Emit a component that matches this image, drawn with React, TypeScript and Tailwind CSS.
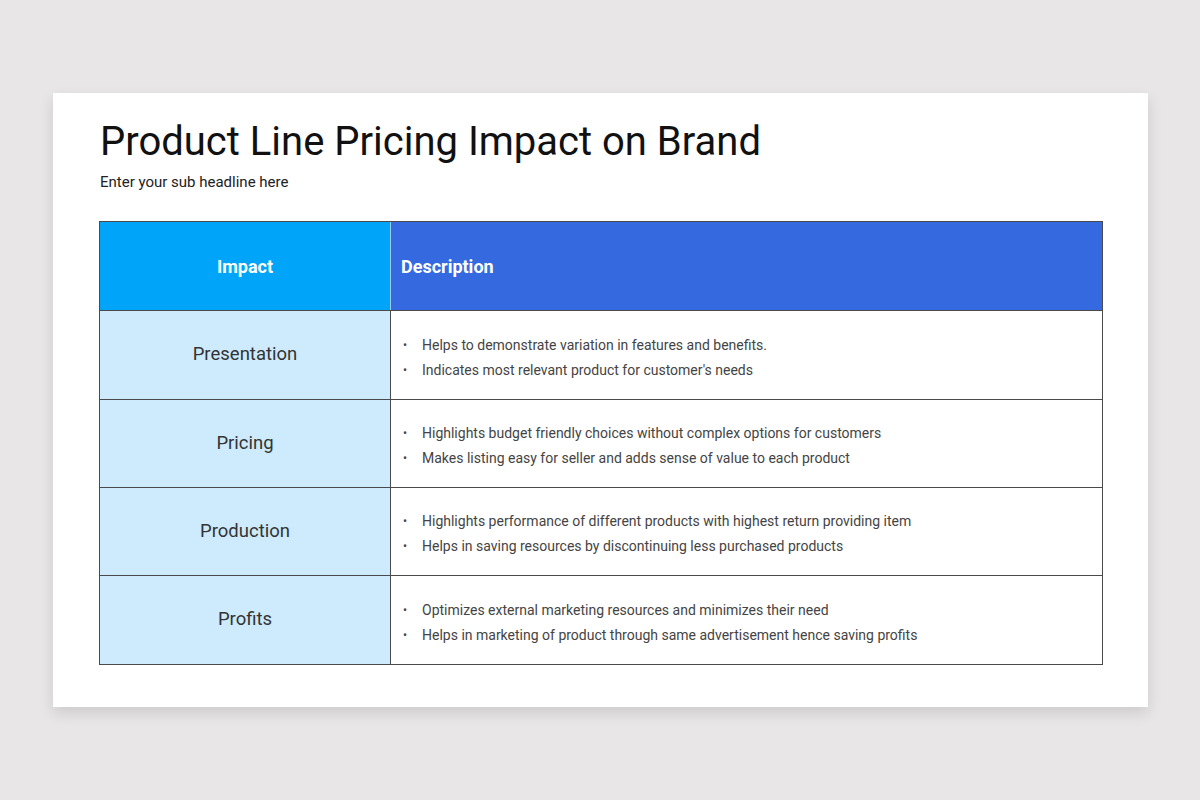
const rows = [
  {
    label: 'Presentation',
    h: 'h-[89px]',
    items: ['Helps to demonstrate variation in features and benefits.', "Indicates most relevant product for customer's needs"],
  },
  {
    label: 'Pricing',
    h: 'h-[88px]',
    items: [
      'Highlights budget friendly choices without complex options for customers',
      'Makes listing easy for seller and adds sense of value to each product',
    ],
  },
  {
    label: 'Production',
    h: 'h-[88px]',
    items: [
      'Highlights performance of different products with highest return providing item',
      'Helps in saving resources by discontinuing less purchased products',
    ],
  },
  {
    label: 'Profits',
    h: 'h-[89px]',
    items: [
      'Optimizes external marketing resources and minimizes their need',
      'Helps in marketing of product through same advertisement hence saving profits',
    ],
  },
]

export default function App() {
  return (
    <div className="h-[800px] w-[1200px] bg-[#e8e6e7] pl-[53px] pt-[93px] font-['Roboto',sans-serif]">
      <div className="h-[614px] w-[1095px] bg-white pl-[47px] pt-[25px] shadow-[0_6px_14px_rgba(0,0,0,0.12)]">
        <h1 className="text-[40px] leading-[48px] font-normal text-[#111]">Product Line Pricing Impact on Brand</h1>
        <p className="mt-[6px] text-[15px] leading-[20px] text-[#222]">Enter your sub headline here</p>

        <div className="-ml-px mt-[29px] grid w-[1004px] grid-cols-[291px_1fr] border border-[#4a4a4a]">
          <div className="flex h-[88px] items-center justify-center border-r border-[#9ec9e8] bg-[#00a5fa] text-[18px] font-bold text-white">
            Impact
          </div>
          <div className="flex h-[88px] items-center bg-[#3569e0] pl-[10px] text-[18px] font-bold text-white">
            Description
          </div>

          {rows.map((row) => (
            <div key={row.label} className="contents">
              <div className={`flex ${row.h} items-center justify-center border-t border-r border-[#4a4a4a] bg-[#cdebfd] text-[18.5px] text-[#333]`}>
                {row.label}
              </div>
              <div className={`flex ${row.h} flex-col justify-center gap-[5px] border-t border-[#4a4a4a] bg-white pl-[11px] pt-[4px]`}>
                {row.items.map((item) => (
                  <div key={item} className="flex items-center text-[14px] leading-[20px] text-[#444]">
                    <span className="w-[20px] pl-[1px] text-[12px]">•</span>
                    <span>{item}</span>
                  </div>
                ))}
              </div>
            </div>
          ))}
        </div>
      </div>
    </div>
  )
}
